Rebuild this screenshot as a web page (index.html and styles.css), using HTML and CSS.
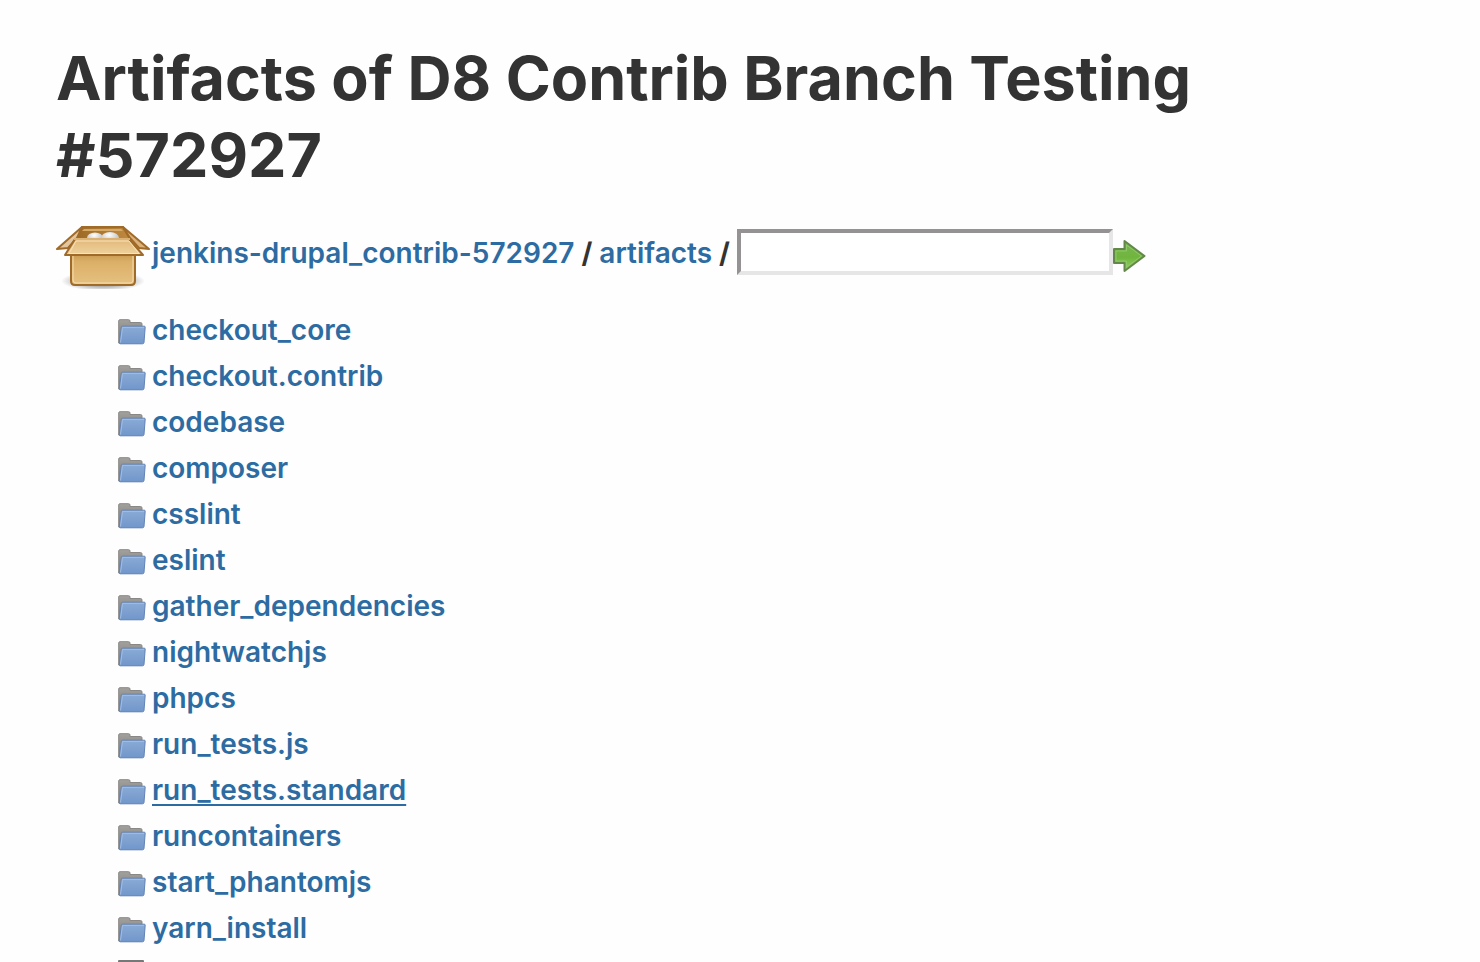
FILE: index.html
```
<!DOCTYPE html>
<html lang="en">
<head>
<meta charset="utf-8">
<title>Artifacts of D8 Contrib Branch Testing #572927</title>
<link rel="stylesheet" href="styles.css">
</head>
<body>
<svg class="defs" aria-hidden="true">
  <defs>
    <linearGradient id="blue" x1="0" y1="0" x2="0" y2="1"><stop offset="0" stop-color="#8aabd6"/><stop offset="1" stop-color="#7196ca"/></linearGradient>
    <linearGradient id="gray" x1="0" y1="0" x2="0" y2="1"><stop offset="0" stop-color="#a3a19e"/><stop offset="1" stop-color="#777674"/></linearGradient>
    <symbol id="folder" viewBox="0 0 28 26">
      <path d="M.7 24V2Q.7.7 2 .7H10.500Q12 .7 12 2V3.500H22.500Q24 3.500 24 5V24Z" fill="url(#gray)" stroke="#8a8886"/>
      <path d="M4.500 7.200H26.300Q27.300 7.200 27.200 8.200L26 23.500Q25.800 24.800 24.500 24.800H2.200Q1 24.800 1.200 23.500L3.300 8.300Q3.400 7.200 4.500 7.200Z" fill="url(#blue)" stroke="#6383b3"/>
      <path d="M2.500 23.500L4.500 8.400H26" fill="none" stroke="#a3bde2"/>
    </symbol>
  </defs>
</svg>
<main class="page">
  <h1 class="title">Artifacts of D8 Contrib Branch Testing #572927</h1>
  <form class="path" onsubmit="return false">
    <svg class="box" viewBox="0 -1 96 72" aria-hidden="true">
      <defs>
        <radialGradient id="shadow"><stop offset=".55" stop-color="#000" stop-opacity=".3"/><stop offset="1" stop-color="#000" stop-opacity="0"/></radialGradient>
        <linearGradient id="front" x1="0" y1="0" x2="0" y2="1"><stop offset="0" stop-color="#c99a50"/><stop offset=".25" stop-color="#dbaf68"/><stop offset="1" stop-color="#e6c180"/></linearGradient>
        <linearGradient id="flap" x1="0" y1="0" x2="0" y2="1"><stop offset="0" stop-color="#e0b878"/><stop offset="1" stop-color="#f0d3a0"/></linearGradient>
        <linearGradient id="inside" x1="0" y1="0" x2="1" y2="0"><stop offset="0" stop-color="#9a6825"/><stop offset="1" stop-color="#c18b40"/></linearGradient>
        <radialGradient id="ball" cx=".45" cy=".25"><stop offset="0" stop-color="#fff"/><stop offset="1" stop-color="#c9c9c9"/></radialGradient>
      </defs>
      <ellipse cx="47" cy="63" rx="42" ry="10" fill="url(#shadow)"/>
      <path d="M26 9H67L77 26V38H17V26Z" fill="url(#inside)" stroke="#a06a28" stroke-width="2" stroke-linejoin="round"/>
      <path d="M28 11H65L67 13H26Z" fill="#d6a967"/>
      <ellipse cx="39" cy="20" rx="8" ry="5.500" fill="url(#ball)"/>
      <ellipse cx="54" cy="20" rx="9" ry="6" fill="url(#ball)"/>
      <path d="M26 9L1 31L12 30L21 20Z" fill="#e3c69f" stroke="#a06a28" stroke-width="2" stroke-linejoin="round"/>
      <path d="M67 9L93 31L83 30L74 20Z" fill="#dcb27a" stroke="#a06a28" stroke-width="2" stroke-linejoin="round"/>
      <path d="M15 36H79V63Q79 67 75 67H19Q15 67 15 63Z" fill="url(#front)" stroke="#a06a28" stroke-width="2"/>
      <path d="M17 38V62Q17 65 20 65H74Q77 65 77 62V38" fill="none" stroke="#f5dcb0"/>
      <path d="M19 21H73L87 37H9Z" fill="url(#flap)" stroke="#a06a28" stroke-width="2" stroke-linejoin="round"/>
      <path d="M18 21H74" stroke="#dcb274" stroke-width="2"/>
      <path d="M20 23H73L83 35.500H13Z" fill="none" stroke="#f8e3bd"/>
    </svg>
    <a href="#">jenkins-drupal_contrib-572927</a>
    <span class="sep">/</span>
    <a href="#">artifacts</a>
    <span class="sep">/</span>
    <input class="pattern" type="text" aria-label="File pattern">
    <button class="go" type="submit" aria-label="Go">
      <svg class="arrow" viewBox="0 0 34 34" aria-hidden="true">
        <defs><linearGradient id="green" x1="0" y1="0" x2="0" y2="1"><stop offset="0" stop-color="#7ab356"/><stop offset=".55" stop-color="#6fb63c"/><stop offset="1" stop-color="#98cf70"/></linearGradient></defs>
        <path d="M1 10H11.500V2L31.500 17L11.500 32V24H1Z" fill="url(#green)" stroke="#64884a" stroke-width="2" stroke-linejoin="round"/>
        <path d="M3 12H13.500V6L28.500 17L13.500 28V22H3Z" fill="none" stroke="#8fc967"/>
      </svg>
    </button>
  </form>
  <ul class="files">
    <li><svg class="icon" aria-hidden="true"><use href="#folder"/></svg><a href="#">checkout_core</a></li>
    <li><svg class="icon" aria-hidden="true"><use href="#folder"/></svg><a href="#">checkout.contrib</a></li>
    <li><svg class="icon" aria-hidden="true"><use href="#folder"/></svg><a href="#">codebase</a></li>
    <li><svg class="icon" aria-hidden="true"><use href="#folder"/></svg><a href="#">composer</a></li>
    <li><svg class="icon" aria-hidden="true"><use href="#folder"/></svg><a href="#">csslint</a></li>
    <li><svg class="icon" aria-hidden="true"><use href="#folder"/></svg><a href="#">eslint</a></li>
    <li><svg class="icon" aria-hidden="true"><use href="#folder"/></svg><a href="#">gather_dependencies</a></li>
    <li><svg class="icon" aria-hidden="true"><use href="#folder"/></svg><a href="#">nightwatchjs</a></li>
    <li><svg class="icon" aria-hidden="true"><use href="#folder"/></svg><a href="#">phpcs</a></li>
    <li><svg class="icon" aria-hidden="true"><use href="#folder"/></svg><a href="#">run_tests.js</a></li>
    <li><svg class="icon" aria-hidden="true"><use href="#folder"/></svg><a class="active" href="#">run_tests.standard</a></li>
    <li><svg class="icon" aria-hidden="true"><use href="#folder"/></svg><a href="#">runcontainers</a></li>
    <li><svg class="icon" aria-hidden="true"><use href="#folder"/></svg><a href="#">start_phantomjs</a></li>
    <li><svg class="icon" aria-hidden="true"><use href="#folder"/></svg><a href="#">yarn_install</a></li>
    <li><svg class="icon document" viewBox="0 0 28 32" aria-hidden="true"><rect x="0" y="0" width="26" height="32" rx="1" fill="#777"/><rect x="2" y="2" width="22" height="28" fill="#eee"/></svg></li>
  </ul>
</main>
</body>
</html>
```
FILE: styles.css
```
* {
  box-sizing: border-box;
}

body {
  margin: 0;
  background: #fefefe;
  color: #333;
  font: 600 28px/46px Inter, "Liberation Sans", sans-serif;
}

.defs {
  position: absolute;
  width: 0;
  height: 0;
}

.page {
  height: 100vh;
  padding: 40px 56px 0;
  overflow: hidden;
}

.title {
  margin: 0;
  font-size: 61px;
  font-weight: 700;
  line-height: 77px;
}

.path {
  display: flex;
  align-items: center;
  margin-top: 23px;
  height: 72px;
}

a {
  color: #2d6ca2;
  text-decoration: none;
}

a.active,
.files a:hover {
  text-decoration: underline;
  text-decoration-thickness: 2px;
  text-underline-offset: 4px;
  text-decoration-skip-ink: none;
}

.box {
  flex: none;
  width: 96px;
  height: 72px;
}

.sep {
  margin: 0 7px;
  font-weight: 700;
}

.pattern {
  width: 376px;
  height: 46px;
  margin-bottom: 2px;
  padding: 0 6px;
  border: 4px solid;
  border-color: #949293 #e6e6e6 #e6e6e6 #949293;
  background: #fff;
  font: inherit;
}

.go {
  padding: 0;
  border: 0;
  background: none;
  line-height: 0;
}

.arrow {
  width: 34px;
  height: 34px;
  margin-top: 6px;
}

.files {
  margin: 18px 0 0;
  padding: 0 0 0 62px;
  list-style: none;
}

.files li {
  display: flex;
  align-items: center;
  gap: 6px;
  height: 46px;
}

.icon {
  flex: none;
  width: 28px;
  height: 26px;
  margin-top: 4px;
}

.document {
  height: 32px;
}
```
